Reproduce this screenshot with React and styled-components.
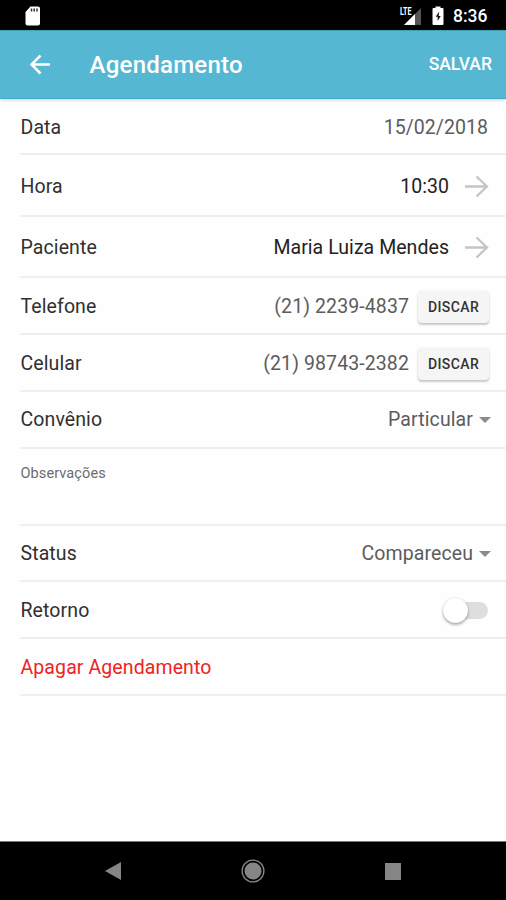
import React from 'react';
import styled, {createGlobalStyle, css} from 'styled-components';

const GlobalStyle = createGlobalStyle`
  * {
    box-sizing: border-box;
  }

  body {
    margin: 0;
    background: #fff;
    font-family: Roboto, 'Liberation Sans', sans-serif;
  }
`;

const Screen = styled.div`
  display: flex;
  flex-direction: column;
  width: 506px;
  height: 900px;
  overflow: hidden;
  background: #fefefe;
`;

const StatusBar = styled.div`
  display: flex;
  align-items: center;
  flex: none;
  height: 30px;
  padding: 1px 18px 0 25px;
  color: #fff;
  background: #000;
`;

const StatusIcons = styled.div`
  display: flex;
  align-items: center;
  margin-left: auto;
`;

const Clock = styled.span`
  width: 35px;
  margin-left: 9px;
  font-size: 17.5px;
  font-weight: 500;
  line-height: 28px;
  white-space: nowrap;
`;

const Toolbar = styled.header`
  display: flex;
  align-items: center;
  flex: none;
  height: 69px;
  padding: 0 14px 0 30px;
  color: #fff;
  background: #55b7d2;
  border-top: 1px solid #3f9cb7;
  border-bottom: 1px solid #41adcb;
  box-shadow: 0 1px 3px rgba(120, 90, 70, 0.3);
`;

const Title = styled.h1`
  margin: 0 auto 0 38.5px;
  font-size: 24px;
  font-weight: 500;
  letter-spacing: 0.25px;
`;

const SaveButton = styled.button`
  padding: 0 0 2px;
  border: 0;
  color: inherit;
  background: none;
  font: 500 17.5px Roboto, sans-serif;
`;

const List = styled.main`
  flex: 1;
  padding-left: 20px;
`;

const Row = styled.div`
  display: flex;
  align-items: center;
  justify-content: space-between;
  height: ${({height}) => height || 57}px;
  padding-top: ${({drop}) => drop || 2}px;
  padding-right: ${({inset}) => inset || 18}px;
  border-bottom: 2px solid #efefef;

  ${({note}) =>
    note &&
    css`
      align-items: flex-start;
      padding-top: 15px;
    `};
`;

const Label = styled.span`
  padding-left: 0.5px;
  color: ${({danger}) => (danger ? '#ee2323' : '#303030')};
  font-size: 19.5px;
  letter-spacing: 0.1px;
  line-height: 24px;
`;

const SmallLabel = styled.span`
  padding-left: 0.5px;
  color: #6c6c6c;
  font-size: 14.5px;
  letter-spacing: 0.1px;
  line-height: 20px;
`;

const Value = styled.span`
  display: flex;
  align-items: center;
  color: ${({strong}) => (strong ? '#222' : '#5c5c5c')};
  font-size: 19.5px;
  letter-spacing: ${({tracking}) => tracking || 0.05}px;
  line-height: 24px;
`;

const DialButton = styled.button`
  width: 71px;
  height: 32px;
  margin-left: 9px;
  padding: 0;
  border: 0;
  border-radius: 4px;
  color: #333;
  background: #f5f5f5;
  font: 500 14px Roboto, sans-serif;
  letter-spacing: 0.4px;
  box-shadow: 0 2px 2px rgba(0, 0, 0, 0.2), 0 0 2px rgba(0, 0, 0, 0.1);
`;

const Caret = styled.i`
  margin-left: 6px;
  border: 6px solid transparent;
  border-top-color: #8b8b8b;
  border-bottom: 0;
`;

const Track = styled.span`
  display: flex;
  align-items: center;
  width: 40px;
  height: 17px;
  border-radius: 9px;
  background: #dedede;
`;

const Knob = styled.span`
  flex: none;
  width: 25px;
  height: 25px;
  margin-left: -5px;
  border-radius: 50%;
  background: #fff;
  box-shadow: 0 2px 3px rgba(0, 0, 0, 0.3), 0 0 2px rgba(0, 0, 0, 0.15);
`;

const NavBar = styled.nav`
  display: flex;
  align-items: center;
  justify-content: space-between;
  flex: none;
  height: 59px;
  padding: 0 105px;
  background: #000;
  border-top: 1px solid #777;
`;

const SdCard = () => (
  <svg width="16" height="20" viewBox="0 0 16 20">
    <path
      d="M5.5 .5H13a2 2 0 0 1 2 2v15a2 2 0 0 1-2 2H2.5a2 2 0 0 1-2-2V6z"
      fill="#fff"
    />
    <path d="M6.5 2.5v3M9.2 2.5v3M12 2.5v3" stroke="#333" strokeWidth="1.5" />
  </svg>
);

const Signal = styled(({className}) => (
  <svg className={className} width="25" height="26" viewBox="0 -3 25 26">
    <path d="M5 19L22 2v17z" fill="#555" />
    <path d="M5 19L16 8v11z" fill="#fff" />
    <text
      x="1"
      y="9"
      fill="#fff"
      stroke="#000"
      strokeWidth="1.5"
      paintOrder="stroke"
      fontSize="11"
      fontWeight="700"
      textLength="11.5"
      lengthAdjust="spacingAndGlyphs"
    >
      LTE
    </text>
  </svg>
))`
  margin-right: 8px;
`;

const Battery = () => (
  <svg width="12" height="20" viewBox="0 0 12 20">
    <path
      d="M3.5 2V.5h5V2h1.7c.8 0 1.3.5 1.3 1.3v14.4c0 .8-.5 1.3-1.3 1.3H1.8C1 19 .5 18.5.5 17.7V3.3C.5 2.5 1 2 1.8 2z"
      fill="#fff"
    />
    <path d="M7.2 5.5L3.7 10.8h2v4.2L8.7 10H6.6z" fill="#111" />
  </svg>
);

const BackArrow = () => (
  <svg width="21" height="20" viewBox="0 0 21 20">
    <path
      d="M20 9.5H2M10.5.5L1.5 9.5l9 9"
      fill="none"
      stroke="#fff"
      strokeWidth="2.6"
    />
  </svg>
);

const ForwardArrow = styled(({className}) => (
  <svg className={className} width="24" height="22" viewBox="0 0 24 22">
    <path
      d="M0 10.5h22M11.5.5L22 10.5 11.5 20.5"
      fill="none"
      stroke="#c5c5c8"
      strokeWidth="2.3"
    />
  </svg>
))`
  margin-left: 16px;
`;

const phones = [
  {label: 'Telefone', number: '(21) 2239-4837'},
  {label: 'Celular', number: '(21) 98743-2382'}
];

export default function App() {
  return (
    <Screen>
      <GlobalStyle />
      <StatusBar>
        <SdCard />
        <StatusIcons>
          <Signal />
          <Battery />
          <Clock>8:36</Clock>
        </StatusIcons>
      </StatusBar>
      <Toolbar>
        <BackArrow />
        <Title>Agendamento</Title>
        <SaveButton>SALVAR</SaveButton>
      </Toolbar>
      <List>
        <Row height={56} drop={4}>
          <Label>Data</Label>
          <Value>15/02/2018</Value>
        </Row>
        <Row height={62} inset={17} drop={3}>
          <Label>Hora</Label>
          <Value strong>
            10:30
            <ForwardArrow />
          </Value>
        </Row>
        <Row height={61} inset={17}>
          <Label>Paciente</Label>
          <Value strong>
            Maria Luiza Mendes
            <ForwardArrow />
          </Value>
        </Row>
        {phones.map(({label, number}) => (
          <Row key={label} inset={17}>
            <Label>{label}</Label>
            <Value tracking={0.1}>
              {number}
              <DialButton>DISCAR</DialButton>
            </Value>
          </Row>
        ))}
        <Row inset={15} drop={1}>
          <Label>Convênio</Label>
          <Value tracking={0.1}>
            Particular
            <Caret />
          </Value>
        </Row>
        <Row height={77} note>
          <SmallLabel>Observações</SmallLabel>
        </Row>
        <Row height={56} inset={15}>
          <Label>Status</Label>
          <Value tracking={0.1}>
            Compareceu
            <Caret />
          </Value>
        </Row>
        <Row>
          <Label>Retorno</Label>
          <Track>
            <Knob />
          </Track>
        </Row>
        <Row>
          <Label danger>Apagar Agendamento</Label>
        </Row>
      </List>
      <NavBar>
        <svg width="16" height="18" viewBox="0 0 16 18">
          <path d="M0 9L16 0v18z" fill="#858585" />
        </svg>
        <svg width="24" height="24" viewBox="0 0 24 24">
          <circle cx="12" cy="12" r="8.5" fill="#858585" />
          <circle cx="12" cy="12" r="10.9" fill="none" stroke="#858585" strokeWidth="1.3" />
        </svg>
        <svg width="17" height="17">
          <path d="M1 0h16v17H1z" fill="#858585" />
        </svg>
      </NavBar>
    </Screen>
  );
}
